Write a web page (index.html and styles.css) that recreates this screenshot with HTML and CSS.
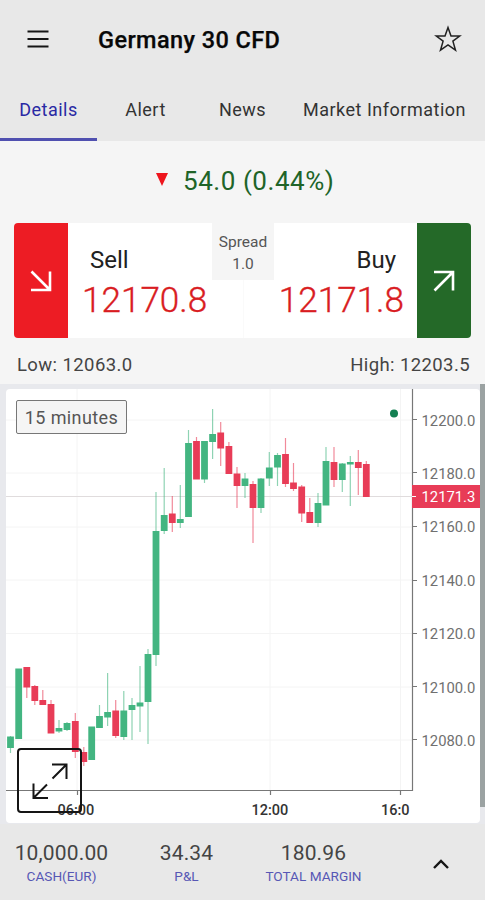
FILE: index.html
```html
<!DOCTYPE html>
<html lang="en">
<head>
<meta charset="utf-8">
<title>Germany 30 CFD</title>
<link rel="stylesheet" href="styles.css">
</head>
<body>
<header class="header">
  <div class="topbar">
    <svg class="menu-icon" viewBox="0 0 22 18"><path d="M.5 1.5h21M.5 9h21M.5 16.500h21"/></svg>
    <h1 class="title">Germany 30 CFD</h1>
    <svg class="star-icon" viewBox="0 0 28 28"><path d="M14 2.500 17 11h8.700l-6.800 5.100 2.600 9.100L14 19.800l-7.500 5.400 2.600-9.100L2.300 11H11z"/></svg>
  </div>
  <nav class="tabs">
    <a class="tab active"><span>Details</span></a>
    <a class="tab"><span>Alert</span></a>
    <a class="tab"><span>News</span></a>
    <a class="tab wide"><span>Market Information</span></a>
  </nav>
</header>

<main>
  <section class="quote">
    <div class="change"><i class="down"></i><span>54.0 (0.44%)</span></div>
    <div class="deal">
      <div class="side sell-side"><svg viewBox="0 0 22 22"><path d="M1.500 1.500 19 19M20 1.500V20H1"/></svg></div>
      <div class="price sell"><span class="label">Sell</span><span class="value">12170.8</span></div>
      <div class="price buy"><span class="label">Buy</span><span class="value">12171.8</span></div>
      <div class="side buy-side"><svg viewBox="0 0 22 22"><path d="M1.500 20.500 19 3M1 2h19v18.500"/></svg></div>
      <div class="spread"><span>Spread</span><span>1.0</span></div>
    </div>
    <div class="range"><span>Low: 12063.0</span><span>High: 12203.5</span></div>
  </section>

  <section class="chart-area">
    <div class="chart-card">
      <svg class="chart" viewBox="6 389 474 434">
        <path class="grid" d="M6 420H412M6 473H412M6 527H412M6 580H412M6 633.500H412M6 687H412M6 740H412M77 389V791M270 389V791M400.500 389V791"/>
        <path class="last-line" d="M6 496.500H412"/>
        <path class="wick up" d="M10.500 736V753M59 720V733M67 722V731M99.500 705V728M107.600 673V726M123.800 691V740M132 698V740M140 666V732M148 649V744M156 492V666M164.200 468V534M180.300 485V528M188.500 430V517M204.500 441V483M212.600 409V459M245 473V498M261 478V513M269.300 452V486M277.500 453V486M318 493V527M326 447V505M342.300 463V492M350.300 456V506"/>
        <path class="wick fall" d="M26.800 667V698M34.800 685V705M42.800 690V705M51 700V733M75.300 713V758M83.800 747V766M115.700 700V738M172.300 496V532M196.500 437V479M220.700 422V466M228.900 442V474M237 467V508M253 481V543M285.500 438V487M293.500 463V491M301.700 485V522M309.800 498V523M334 447V487M358.300 450V495M366.300 461V497"/>
        <path class="body up" d="M10.500 736.500V748M18.700 668.500V739M59 728V731.500M67 723V730M91.700 726.500V760M99.500 716V728M107.600 712V717.500M123.800 710.500V737M132 705V710M140 702.500V706.500M148 654V702M156 531V655M164.200 515V531M180.300 519V523M188.500 443V517M204.500 441V479.500M212.600 434V442M245 478.500V486M261 478.500V508M269.300 467.500V478.500M277.500 455V467.500M318 503V523M326 461V505.500M342.300 463.500V480M350.300 462V464.500"/>
        <path class="body fall" d="M26.800 667V687.500M34.800 686V701M42.800 700V705M51 704V733.500M75.300 721V752M83.800 752V762M115.700 710.500V736M172.300 513.500V523M196.500 441V479.500M220.700 432.500V448.500M228.900 446V474M237 473.500V486M253 484V508M285.500 454V484M293.500 482.500V489M301.700 486.500V513.500M309.800 512V523M334 462V480M358.300 462V468M366.300 464V497"/>
        <circle class="dot" cx="394" cy="413.500" r="4"/>
        <path class="axis" d="M412.500 389V790.500H6M412 419.500h5M412 472.500h5M412 526.500h5M412 580.500h5M412 633.500h5M412 686.500h5M412 739.500h5M77.500 791v4M270.500 791v4M400.500 791v4"/>
        <g class="price-label">
          <text x="421.500" y="426">12200.0</text><text x="421.500" y="478.500">12180.0</text><text x="421.500" y="532">12160.0</text><text x="421.500" y="586">12140.0</text><text x="421.500" y="639">12120.0</text><text x="421.500" y="693">12100.0</text><text x="421.500" y="746">12080.0</text>
        </g>
        <rect class="last-tag" x="412" y="485" width="69" height="23"/>
        <path class="last-tick" d="M412 496.500h4"/>
        <text class="last-text" x="421.500" y="501.500">12171.3</text>
        <g class="time-label"><text x="57.500" y="814.500">06:00</text><text x="251.500" y="814.500">12:00</text><text x="381" y="814.500">16:0</text></g>
      </svg>
      <div class="interval">15 minutes</div>
      <div class="expand"><svg viewBox="0 0 36 36"><path d="M20.500 15.500 34 2M20 1.500h14.500V16M15 21.500 1.500 35M1.500 20.500V35H16"/></svg></div>
    </div>
    <div class="scrollbar"></div>
  </section>
</main>

<footer class="footer">
  <div class="stat cash"><b>10,000.00</b><span>CASH(EUR)</span></div>
  <div class="stat pl"><b>34.34</b><span>P&amp;L</span></div>
  <div class="stat margin"><b>180.96</b><span>TOTAL MARGIN</span></div>
  <svg class="chevron" viewBox="0 0 16 10"><path d="M1 9l7-7 7 7"/></svg>
</footer>
</body>
</html>
```
FILE: styles.css
```css
* { box-sizing: border-box; }
body { margin: 0; width: 485px; height: 900px; overflow: hidden; background: #f5f5f5; font-family: Roboto, sans-serif; color: #222; display: flex; flex-direction: column; }
svg { display: block; fill: none; }
.header { height: 141px; background: #e8e8e8; flex: none; }
.topbar { height: 78px; display: flex; align-items: center; padding: 0 23px 0 27px; }
.menu-icon { width: 22px; height: 18px; stroke: #151515; stroke-width: 2.2; }
.title { margin: 1px auto 0 49px; font-size: 23.5px; font-weight: 500; letter-spacing: .4px; color: #080808; -webkit-text-stroke: .25px; }
.star-icon { width: 28px; height: 28px; stroke: #222; stroke-width: 1.5; }
.tabs { display: flex; height: 63px; }
.tab { width: 97px; display: flex; justify-content: center; align-items: center; padding-top: 3px; font-size: 18px; letter-spacing: .5px; border-bottom: 3px solid transparent; color: #333; white-space: nowrap; }
.tab.wide { width: 187px; }
.tab.active { color: #2929a4; border-color: #5050b0; }

.quote { height: 243px; padding: 0 14px; }
.change { height: 82px; display: flex; align-items: center; padding: 0 0 3px 142px; font-size: 26px; letter-spacing: .55px; color: #206428; }
.down { border: 6.5px solid transparent; border-top: 13px solid #ee151d; border-bottom: 0; margin: 0 14px 3px 0; }
.change span { padding-left: 1px; }
.deal { position: relative; height: 115px; display: flex; border-radius: 4px; overflow: hidden; background: #fff; }
.side { width: 54px; display: flex; align-items: center; justify-content: center; }
.side svg { width: 22px; height: 22px; stroke: #fff; stroke-width: 2.6; }
.sell-side { background: #ed1c24; }
.buy-side { background: #246928; }
.price { flex: 1; display: flex; flex-direction: column; padding-top: 22px; }
.sell { padding-left: 14px; border-right: 1px solid #fafafa; }
.buy { padding-right: 13px; align-items: flex-end; }
.label { font-size: 24px; line-height: 31px; padding: 0 8px; }
.value { font-size: 35px; line-height: 49px; letter-spacing: .05px; color: #d91c22; font-weight: 300; -webkit-text-stroke: .35px; }
.spread { position: absolute; left: 198px; top: 0; width: 62px; height: 57px; background: #f5f5f5; display: flex; flex-direction: column; align-items: center; padding-top: 8px; font-size: 15.5px; line-height: 22px; color: #555; }
.range { display: flex; justify-content: space-between; padding: 15px 1px 0 3px; font-size: 18.5px; line-height: 24px; letter-spacing: .4px; color: #444; }

.chart-area { height: 440px; background: #e8e9ed; display: flex; }
.chart-card { position: relative; width: 474px; height: 434px; margin: 5px 0 0 6px; background: #fff; border-radius: 4px; }
.chart { width: 474px; height: 434px; border-radius: 4px; }
.scrollbar { width: 5px; height: 423px; background: #9ba2a2; }
.grid { stroke: #f4f4f4; }
.last-line { stroke: #e0dcdd; }
.wick { stroke-width: 1.2; opacity: .6; }
.body { stroke-width: 6.8; }
.up { stroke: #43b581; }
.fall { stroke: #e83c57; }
.dot { fill: #148052; }
.axis { stroke: #777; stroke-width: 1.2; }
.price-label { fill: #707070; font-size: 14.8px; }
.last-tag { fill: #e83c57; }
.last-tick { stroke: #fff; }
.last-text { fill: #fff; font-size: 14.8px; }
.time-label { fill: #333; font-size: 14.5px; font-weight: 500; }
.interval { position: absolute; left: 10px; top: 11px; width: 111px; height: 34px; border: 1.5px solid #777; border-radius: 2px; background: #f5f5f5; color: #555; font-size: 18px; line-height: 33px; text-align: center; letter-spacing: .4px; }
.expand { position: absolute; left: 11px; top: 359px; width: 65px; height: 65px; border: 2px solid #151515; border-radius: 4px; display: flex; align-items: center; justify-content: center; }
.expand svg { width: 36px; height: 36px; stroke: #151515; stroke-width: 2; }

.footer { height: 76px; background: #e8e8e8; display: flex; align-items: flex-start; padding-top: 16px; }
.stat { display: flex; flex-direction: column; align-items: center; }
.cash { width: 123px; }
.pl { width: 127px; }
.margin { width: 127px; }
.stat b { font-size: 21px; line-height: 26px; font-weight: 400; letter-spacing: .15px; color: #444; }
.stat span { font-size: 13.6px; line-height: 21px; color: #5757b5; white-space: nowrap; }
.chevron { width: 16px; height: 10px; margin: 19px 0 0 56px; stroke: #151515; stroke-width: 2.4; }
```
